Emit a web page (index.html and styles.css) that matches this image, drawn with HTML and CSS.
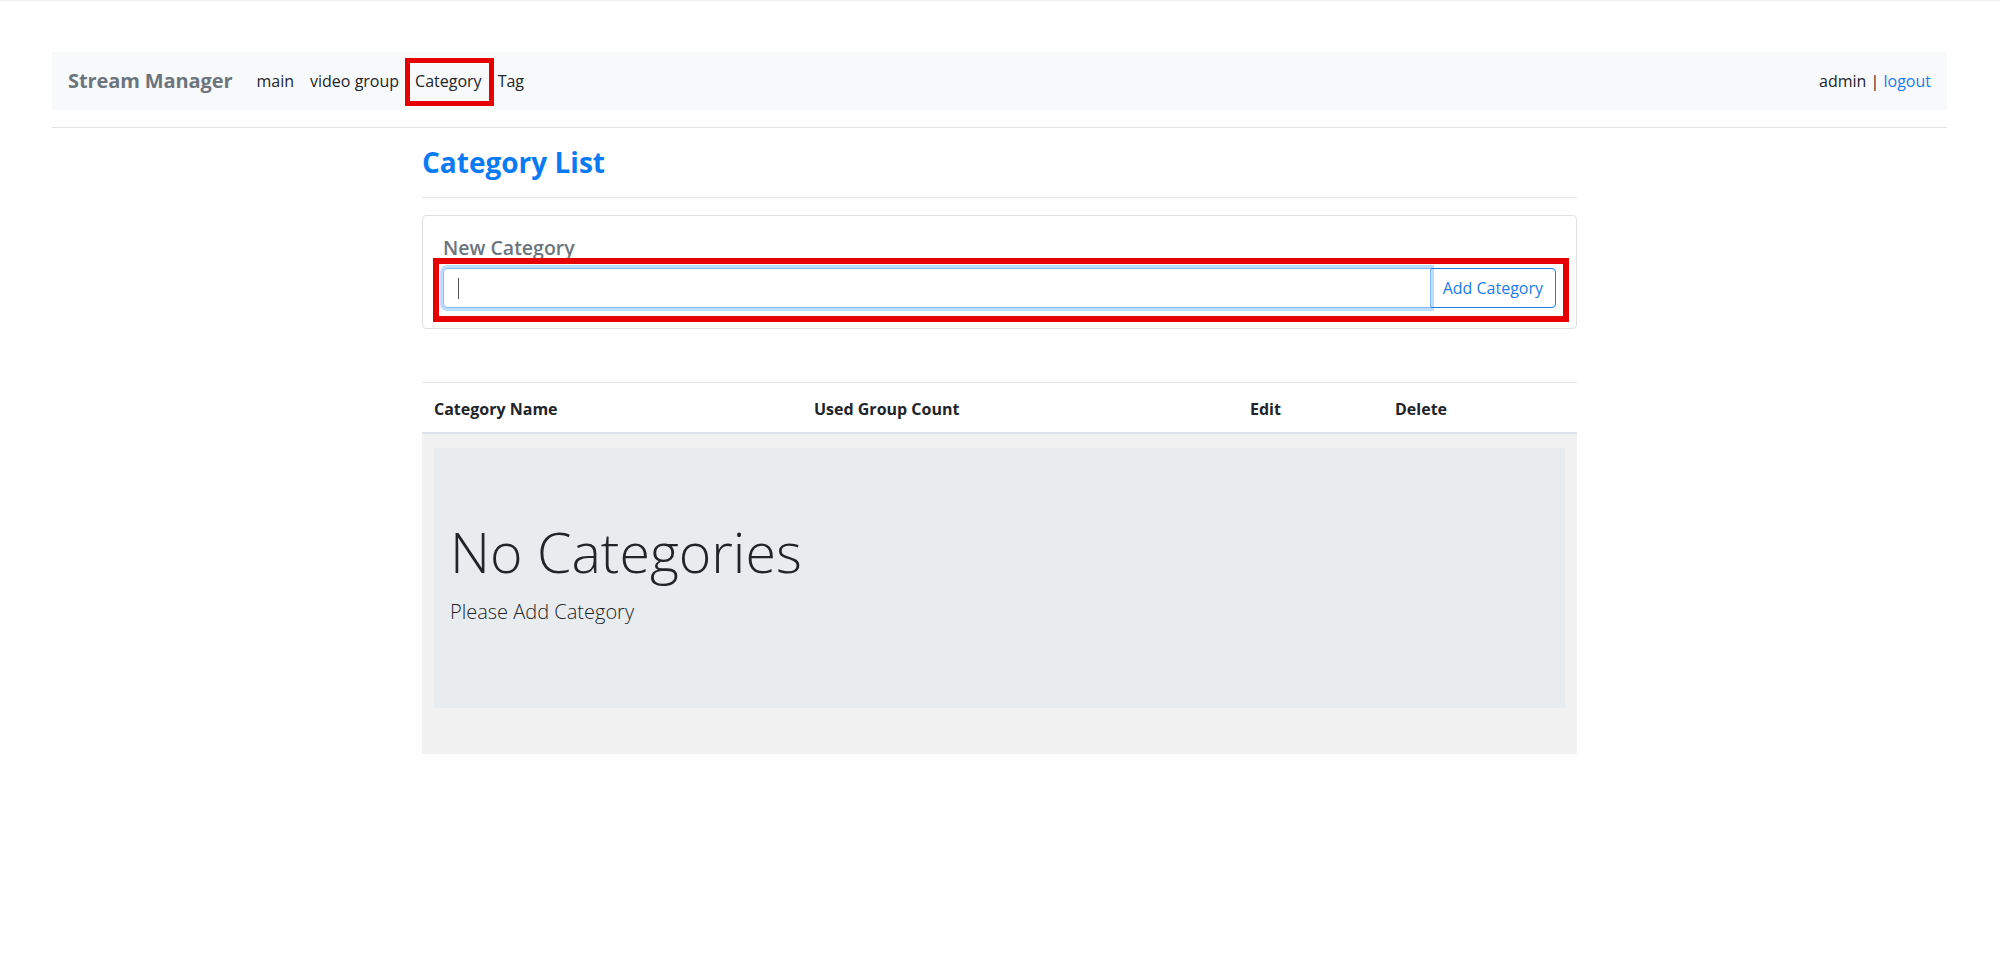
FILE: index.html
```html
<!DOCTYPE html>
<html lang="en">
<head>
<meta charset="utf-8">
<title>Stream Manager - Category</title>
<link rel="stylesheet" href="styles.css">
</head>
<body>
<div class="page">
  <nav class="navbar">
    <a class="brand" href="#">Stream Manager</a>
    <ul class="nav-links">
      <li><a class="nav-link" href="#">main</a></li>
      <li><a class="nav-link" href="#">video group</a></li>
      <li><a class="nav-link marked" href="#">Category</a></li>
      <li><a class="nav-link" href="#">Tag</a></li>
    </ul>
    <div class="user">admin | <a class="logout" href="#">logout</a></div>
  </nav>
  <div class="rule"></div>

  <main class="container">
    <h2 class="title">Category List</h2>
    <div class="title-rule"></div>

    <section class="card">
      <h5 class="card-label">New Category</h5>
      <div class="input-group marked-group">
        <div class="form-control focused" role="textbox"><span class="caret"></span></div>
        <button class="btn-outline" type="button">Add Category</button>
      </div>
    </section>

    <table class="table">
      <colgroup>
        <col class="c1"><col class="c2"><col class="c3"><col class="c4">
      </colgroup>
      <thead>
        <tr>
          <th>Category Name</th>
          <th>Used Group Count</th>
          <th>Edit</th>
          <th>Delete</th>
        </tr>
      </thead>
      <tbody>
        <tr>
          <td colspan="4" class="empty-cell">
            <div class="jumbotron">
              <h1 class="display">No Categories</h1>
              <p class="lead">Please Add Category</p>
            </div>
          </td>
        </tr>
      </tbody>
    </table>
  </main>
</div>
</body>
</html>
```

FILE: styles.css
```css
* { box-sizing: border-box; }

html, body {
  margin: 0;
  padding: 0;
  background: #ffffff;
}

body {
  border-top: 1px solid #f1f1f1;
  font-family: "Open Sans", "Noto Sans", "Liberation Sans", sans-serif;
  color: #212529;
  font-size: 16px;
  line-height: 1.5;
}

a { text-decoration: none; }

.page {
  padding: 51px 53px 0 52px;
}

/* Navbar */
.navbar {
  display: flex;
  align-items: center;
  height: 58px;
  padding: 0 16px;
  background: #f8f9fa;
}

.brand {
  font-size: 20px;
  font-weight: 700;
  color: #6c757d;
  margin-right: 16px;
  letter-spacing: -0.1px;
}

.nav-links {
  display: flex;
  list-style: none;
  margin: 0;
  padding: 0;
  flex: 1;
}

.nav-link {
  display: block;
  position: relative;
  padding: 0 8px;
  font-size: 16px;
  line-height: 24px;
  color: #212529;
}

.marked::after {
  content: "";
  position: absolute;
  left: -2px;
  right: -4px;
  top: -11px;
  bottom: -13px;
  border: 5px solid #e60000;
}

.user {
  font-size: 16px;
  color: #212529;
}

.logout { color: #1a7cf0; }

.rule {
  height: 1px;
  background: #e2e3e5;
  margin-top: 17px;
}

/* Content */
.container {
  width: 1155px;
  margin: 0 auto;
}

.title {
  margin: 17px 0 0;
  font-size: 28px;
  line-height: 34px;
  font-weight: 700;
  color: #0a7bf5;
}

.title-rule {
  height: 1px;
  background: #e3e4e6;
  margin-top: 18px;
}

.card {
  margin-top: 17px;
  border: 1px solid #dfe0e2;
  border-radius: 4px;
  padding: 20px;
}

.card-label {
  margin: 0 0 8px;
  font-size: 19.5px;
  line-height: 24px;
  font-weight: 600;
  color: #6c757d;
}

.input-group {
  display: flex;
  height: 40px;
}

.marked-group { position: relative; }

.marked-group::after {
  content: "";
  position: absolute;
  left: -10px;
  top: -10px;
  right: -13px;
  bottom: -14px;
  border: 6px solid #e60000;
  pointer-events: none;
}

.form-control {
  flex: 1;
  display: flex;
  align-items: center;
  padding: 0 14px;
  border: 1px solid #ced4da;
  border-radius: 4px 0 0 4px;
  background: #fff;
}

.focused {
  border-color: #80bdff;
  box-shadow: 0 0 0 3px rgba(0, 123, 255, 0.25);
  position: relative;
  z-index: 1;
}

.caret {
  width: 1px;
  height: 21px;
  background: #555;
}

.btn-outline {
  margin-left: -1px;
  padding: 0 12px;
  font-family: inherit;
  font-size: 16px;
  color: #1a7cf0;
  background: #fff;
  border: 1px solid #1a7cf0;
  border-radius: 0 4px 4px 0;
  cursor: pointer;
}

/* Table */
.table {
  width: 1155px;
  margin-top: 53px;
  border-collapse: collapse;
  table-layout: fixed;
}

.c1 { width: 380px; }
.c2 { width: 436px; }
.c3 { width: 145px; }
.c4 { width: 194px; }

.table th {
  text-align: left;
  font-size: 16px;
  font-weight: 700;
  line-height: 24px;
  padding: 14px 12px 11px;
  border-top: 1px solid #e3e4e6;
  border-bottom: 2px solid #dee2e6;
  color: #212529;
}

.empty-cell {
  background: #f1f1f1;
  padding: 14px 12px 46px;
}

.jumbotron {
  background: #e9ecef;
  padding: 70px 16px 65px;
}

.display {
  margin: 0 0 11px;
  font-size: 55.5px;
  line-height: 68px;
  font-weight: 300;
  color: #212529;
}

.lead {
  margin: 0 0 16px;
  font-size: 20px;
  line-height: 30px;
  font-weight: 300;
  color: #212529;
}
```
